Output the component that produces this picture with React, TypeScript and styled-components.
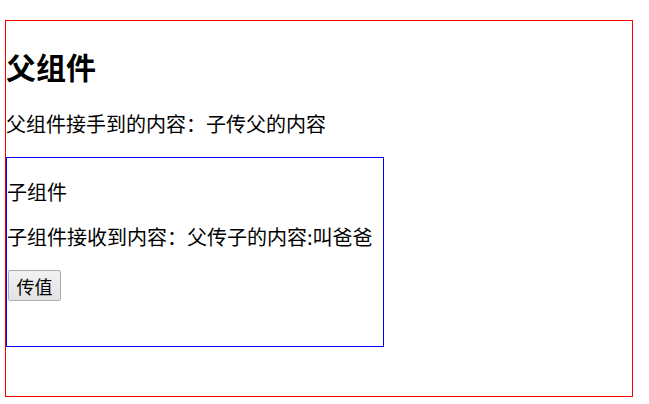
import React, { useState } from "react";
import styled, { createGlobalStyle } from "styled-components";

const GlobalStyle = createGlobalStyle`
  html, body {
    margin: 0;
    padding: 0;
    background: #ffffff;
  }
  body {
    font-family: "Noto Sans CJK SC", "Microsoft YaHei", sans-serif;
    color: #000000;
  }
`;

const Page = styled.div`
  padding: 20px 0 0 5px;
`;

const ParentBox = styled.div`
  box-sizing: border-box;
  width: 628px;
  border: 1px solid #ff0000;
  padding-bottom: 49px;
`;

const Title = styled.h1`
  margin: 30px 0 0 0;
  font-size: 30px;
  line-height: 30px;
  font-weight: 700;
`;

const Text = styled.p<{ $top: number }>`
  margin: ${(p) => p.$top}px 0 0 0;
  font-size: 20px;
  line-height: 20px;
  font-weight: 400;
  white-space: nowrap;
`;

const ChildBox = styled.div`
  box-sizing: border-box;
  width: 378px;
  margin-top: 23px;
  border: 1px solid #0000ff;
  padding-bottom: 45px;
`;

const SendButton = styled.button`
  box-sizing: border-box;
  display: block;
  margin: 23px 0 0 1px;
  width: 53px;
  height: 31px;
  padding: 0;
  font-family: "Noto Sans CJK SC", "Microsoft YaHei", sans-serif;
  font-size: 18px;
  line-height: 1;
  color: #000000;
  border: 1px solid #adadad;
  border-radius: 2px;
  background: linear-gradient(#f2f2f2, #e2e2e2);
  cursor: pointer;
`;

const Child: React.FC<{ msg: string; onSend: (v: string) => void }> = ({ msg, onSend }) => (
  <ChildBox>
    <Text $top={24}>子组件</Text>
    <Text $top={25}>子组件接收到内容：{msg}</Text>
    <SendButton onClick={() => onSend("子传父的内容")}>传值</SendButton>
  </ChildBox>
);

export default function App() {
  const [fromChild, setFromChild] = useState("子传父的内容");
  return (
    <>
      <GlobalStyle />
      <Page>
        <ParentBox>
          <Title>父组件</Title>
          <Text $top={33}>父组件接手到的内容：{fromChild}</Text>
          <Child msg="父传子的内容:叫爸爸" onSend={setFromChild} />
        </ParentBox>
      </Page>
    </>
  );
}
